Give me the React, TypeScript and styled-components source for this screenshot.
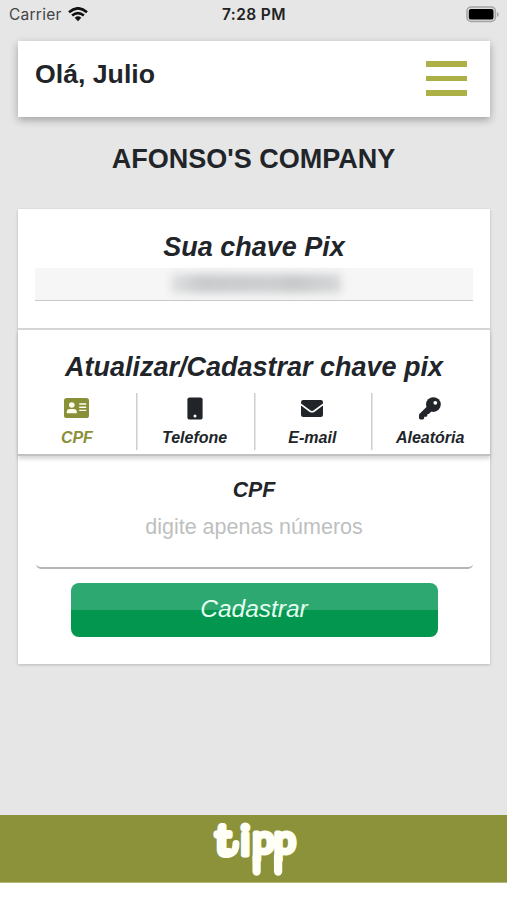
import React from 'react';
import styled, { createGlobalStyle } from 'styled-components';

const GlobalStyle = createGlobalStyle`
  *, *::before, *::after { box-sizing: border-box; }
  body {
    margin: 0;
    background: #fff;
    font-family: "Liberation Sans", Arial, sans-serif;
    color: #212529;
  }
`;

const Screen = styled.div`
  display: flex;
  flex-direction: column;
  width: 507px;
  height: 900px;
  background: #fff;
`;

const Page = styled.main`
  flex: none;
  height: 815px;
  background: #e6e6e6;
`;

const StatusBar = styled.div`
  display: grid;
  grid-template-columns: 1fr auto 1fr;
  align-items: center;
  height: 41px;
  padding: 0 8px 12px 9px;
  font-family: Inter, sans-serif;
  font-size: 15.5px;
  line-height: 18px;
`;

const Carrier = styled.div`
  display: flex;
  align-items: center;
  gap: 6px;
  color: #444;
  letter-spacing: 0.25px;
`;

const Clock = styled.div`
  font-weight: 600;
  color: #222;
  font-size: 15.5px;
  letter-spacing: 0.4px;
`;

const BatterySlot = styled.div`
  display: flex;
  justify-content: flex-end;
`;

const Header = styled.header`
  display: flex;
  justify-content: space-between;
  height: 76px;
  margin: 0 17px 0 18px;
  padding: 17px 23px 0 17px;
  background: #fff;
  box-shadow: 0 3px 8px rgba(0, 0, 0, 0.3);
`;

const Greeting = styled.h1`
  margin: 0;
  font-size: 26.67px;
  line-height: 32px;
`;

const MenuButton = styled.button`
  display: flex;
  flex-direction: column;
  gap: 9px;
  width: 41px;
  height: 41px;
  padding: 3px 0 0;
  border: 0;
  background: none;
`;

const MenuLine = styled.span`
  flex: none;
  height: 5.5px;
  background: #adb046;
`;

const Company = styled.h2`
  margin: 26px 0 0;
  height: 66px;
  text-align: center;
  font-size: 27px;
  line-height: 32px;
`;

const Card = styled.section`
  height: 455px;
  margin: 0 17px 0 18px;
  background: #fff;
  box-shadow: 0 1px 3px rgba(0, 0, 0, 0.2);
`;

const KeySection = styled.div`
  height: 121px;
  padding: 22px 17px 0 17px;
  border-bottom: 2px solid #d6d6d6;
`;

const SectionTitle = styled.h3`
  margin: 0;
  text-align: center;
  font-size: 27px;
  font-style: italic;
  line-height: 32px;
  white-space: nowrap;
`;

const CurrentKey = styled.div`
  display: flex;
  justify-content: center;
  margin-top: 5px;
  height: 33px;
  padding-top: 6px;
  background: #f6f6f6;
  border-bottom: 1.5px solid #c8c9ca;
`;

const HiddenValue = styled.span`
  width: 170px;
  height: 19px;
  margin-left: 3px;
  background: linear-gradient(90deg, #dfe0e1, #c8cacc 18%, #cccecf 60%, #c6c8c9 72%, #d6d7d8);
  filter: blur(4px);
`;

const TypeSection = styled.div`
  height: 126px;
  padding-top: 21px;
  border-bottom: 2px solid #c2c2c2;
  box-shadow: 0 3px 4px rgba(0, 0, 0, 0.16);
`;

const Tabs = styled.div`
  display: grid;
  grid-template-columns: repeat(4, 1fr);
  margin: 10px 1px 0 0;
`;

const Tab = styled.button<{ $active?: boolean }>`
  display: flex;
  flex-direction: column;
  align-items: center;
  height: 57px;
  padding: 0;
  border: 0;
  background: none;
  color: ${(p) => (p.$active ? '#8a9038' : '#212529')};
  font: italic bold 16px/20px "Liberation Sans", Arial, sans-serif;

  & + & { box-shadow: inset 1.5px 0 #cecece; }
`;

const TabIcon = styled.span`
  display: flex;
  align-items: center;
  height: 30px;
  margin-bottom: 5px;
`;

const Form = styled.form`
  display: flex;
  flex-direction: column;
  align-items: center;
  padding-top: 22px;
`;

const FieldLabel = styled.label`
  font-size: 21.3px;
  font-weight: bold;
  font-style: italic;
  line-height: 24px;
`;

const FieldInput = styled.input`
  width: 437px;
  height: 67px;
  padding: 0 0 15px;
  border: 0 solid #b5b5b5;
  border-bottom-width: 2px;
  border-radius: 5px;
  background: transparent;
  text-align: center;
  font: 21.5px/26px "Liberation Sans", Arial, sans-serif;
  outline: 0;

  &::placeholder { color: #bebfc0; opacity: 1; }
`;

const SubmitButton = styled.button`
  width: 367px;
  height: 54px;
  margin-top: 14px;
  padding: 0 0 2px;
  border: 0;
  border-radius: 8px;
  background: linear-gradient(#2ca870 0 50%, #03964f 50% 100%);
  color: #e6fff0;
  font: italic 24.5px/30px "Liberation Sans", Arial, sans-serif;
`;

const Footer = styled.footer`
  display: flex;
  flex: none;
  justify-content: center;
  height: 68px;
  background: #8c923a;
  border-bottom: 1px solid #b3b77a;
`;

const LogoMark = styled.svg`
  display: block;
  overflow: visible;
  font-family: Lato, sans-serif;
  font-size: 41px;
`;

const WifiIcon = () => (
  <svg width="20" height="15" viewBox="0 0 20 15" fill="none" stroke="#111" strokeWidth="2.6">
    <path d="M1 5.2Q10-2.6 19 5.2" />
    <path d="M4.1 8.6Q10 3.7 15.9 8.6" />
    <path d="M6.7 10.7Q10 8 13.3 10.7L10 14.3Z" fill="#111" stroke="none" />
  </svg>
);

const BatteryIcon = () => (
  <svg width="33" height="17" viewBox="0 0 33 17">
    <rect x="0.9" y="1" width="28.5" height="14.5" rx="4.2" fill="#dcdcdc" stroke="#a5a5a5" strokeWidth="1.5" />
    <rect x="2.8" y="2.9" width="24.7" height="10.7" rx="2.2" fill="#000" />
    <path d="M31 6v5q1.8-.7 1.8-2.5T31 6" fill="#a5a5a5" />
  </svg>
);

const IdCardIcon = () => (
  <svg width="25" height="20" viewBox="0 0 25 20">
    <rect width="25" height="20" rx="2.6" fill="#8a9038" />
    <g fill="#fffff0">
      <circle cx="7.8" cy="7" r="2.8" />
      <path d="M2.8 15.3v-1q0-3.3 3.3-3.3h3.4q3.3 0 3.3 3.3v1z" />
    </g>
    <path d="M15.2 6h7M15.2 9.2h7M15.2 12.4h7" stroke="#fffff0" strokeWidth="1.4" />
  </svg>
);

const PhoneIcon = () => (
  <svg width="16" height="23" viewBox="0 0 16 23">
    <rect x="0.4" y="0.4" width="15.2" height="22.2" rx="2.2" fill="#212529" />
    <circle cx="8" cy="19" r="1.5" fill="#fff" />
  </svg>
);

const EnvelopeIcon = () => (
  <svg width="22" height="17" viewBox="0 0 22 17">
    <rect width="22" height="17" rx="2.2" fill="#212529" />
    <path d="M-0.5 4.2L8.8 11Q11 12.4 13.2 11L22.5 4.2" fill="none" stroke="#fff" strokeWidth="1.6" />
  </svg>
);

const KeyIcon = () => (
  <svg width="22" height="23" viewBox="0 0 22 23">
    <circle cx="14.4" cy="7.6" r="7.4" fill="#212529" />
    <path d="M8 9.4L.6 16.8Q0 17.4 0 18.4v2.6Q0 22.4 1.4 22.4H3.8Q5.2 22.4 5.2 21V19.8H6.9Q8.4 19.8 8.4 18.2V17H9.8L13.4 13.6Z" fill="#212529" />
    <circle cx="16.3" cy="5.8" r="1.9" fill="#fff" />
  </svg>
);

const Logo = () => (
  <LogoMark
    width="90"
    height="67"
    viewBox="0 0 90 67"
    role="img"
    aria-label="tipp"
    fill="#fffff5"
    stroke="#fffff5"
    strokeWidth="5"
    strokeLinejoin="round"
    strokeLinecap="round"
  >
    <text y="40">
      <tspan x="6.5" fontSize="42" strokeWidth="6">t</tspan>
      <tspan x="31.5" fontSize="40">i</tspan>
      <tspan x="43.5" y="38" fontSize="39">p</tspan>
      <tspan x="65" y="38" fontSize="39">p</tspan>
    </text>
    <path d="M18.5 39.5Q27 38.5 27 28.5" fill="none" strokeWidth="7" />
    <path d="M47.6 42V56.5M69.1 42V56.5" strokeWidth="8.3" />
  </LogoMark>
);

const keyTypes = [
  { label: 'CPF', icon: <IdCardIcon /> },
  { label: 'Telefone', icon: <PhoneIcon /> },
  { label: 'E-mail', icon: <EnvelopeIcon /> },
  { label: 'Aleatória', icon: <KeyIcon /> },
];

export default function App() {
  return (
    <Screen>
      <GlobalStyle />
      <Page>
        <StatusBar>
          <Carrier>Carrier <WifiIcon /></Carrier>
          <Clock>7:28 PM</Clock>
          <BatterySlot><BatteryIcon /></BatterySlot>
        </StatusBar>
        <Header>
          <Greeting>Olá, Julio</Greeting>
          <MenuButton type="button" aria-label="Menu">
            <MenuLine /><MenuLine /><MenuLine />
          </MenuButton>
        </Header>
        <Company>AFONSO'S COMPANY</Company>
        <Card>
          <KeySection>
            <SectionTitle>Sua chave Pix</SectionTitle>
            <CurrentKey><HiddenValue /></CurrentKey>
          </KeySection>
          <TypeSection>
            <SectionTitle>Atualizar/Cadastrar chave pix</SectionTitle>
            <Tabs>
              {keyTypes.map((type, index) => (
                <Tab key={type.label} type="button" $active={index === 0}>
                  <TabIcon>{type.icon}</TabIcon>
                  {type.label}
                </Tab>
              ))}
            </Tabs>
          </TypeSection>
          <Form>
            <FieldLabel htmlFor="cpf">CPF</FieldLabel>
            <FieldInput id="cpf" placeholder="digite apenas números" />
            <SubmitButton type="button">Cadastrar</SubmitButton>
          </Form>
        </Card>
      </Page>
      <Footer><Logo /></Footer>
    </Screen>
  );
}
